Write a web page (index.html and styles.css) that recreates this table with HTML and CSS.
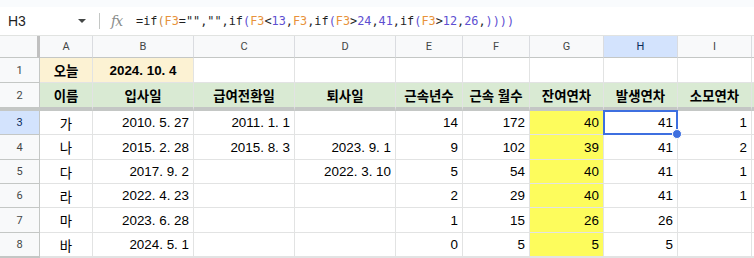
FILE: index.html
```html
<!DOCTYPE html>
<html lang="ko">
<head>
<meta charset="utf-8">
<title>Sheet</title>
<link rel="stylesheet" href="styles.css">
</head>
<body>
<div class="app">
  <div class="topstrip"></div>
  <div class="formulabar">
    <div class="namebox"><span class="ref">H3</span><span class="caret"></span></div>
    <div class="sep"></div>
    <div class="fx">fx</div>
    <div class="formula"><span class="k">=if</span><span class="p1">(</span><span class="rf">F3</span><span class="k">=&quot;&quot;,&quot;&quot;,if</span><span class="p2">(</span><span class="rf">F3</span><span class="k">&lt;</span><span class="n">13</span><span class="k">,</span><span class="rf">F3</span><span class="k">,if</span><span class="p2">(</span><span class="rf">F3</span><span class="k">&gt;</span><span class="n">24</span><span class="k">,</span><span class="n">41</span><span class="k">,if</span><span class="p2">(</span><span class="rf">F3</span><span class="k">&gt;</span><span class="n">12</span><span class="k">,</span><span class="n">26</span><span class="k">,</span><span class="p2">))))</span></div>
  </div>
  <div class="grid">
    <div class="corner"></div>
    <div class="hd">A</div><div class="hd">B</div><div class="hd">C</div><div class="hd">D</div><div class="hd">E</div><div class="hd">F</div><div class="hd">G</div><div class="hd hd-on">H</div><div class="hd">I</div><div class="hd hd-last"></div>

    <div class="rh">1</div>
    <div class="c ctr b yl">오늘</div><div class="c ctr b yl">2024. 10. 4</div><div class="c"></div><div class="c"></div><div class="c"></div><div class="c"></div><div class="c"></div><div class="c"></div><div class="c"></div><div class="c"></div>

    <div class="rh frz">2</div>
    <div class="c ctr b gr frz">이름</div><div class="c ctr b gr frz">입사일</div><div class="c ctr b gr frz">급여전환일</div><div class="c ctr b gr frz">퇴사일</div><div class="c ctr b gr frz">근속년수</div><div class="c ctr b gr frz">근속 월수</div><div class="c ctr b gr frz">잔여연차</div><div class="c ctr b gr frz">발생연차</div><div class="c ctr b gr frz">소모연차</div><div class="c gr frz"></div>

    <div class="rh rh-on">3</div>
    <div class="c ctr">가</div><div class="c r">2010. 5. 27</div><div class="c r">2011. 1. 1</div><div class="c"></div><div class="c r">14</div><div class="c r">172</div><div class="c r hy">40</div><div class="c r sel">41</div><div class="c r">1</div><div class="c"></div>

    <div class="rh">4</div>
    <div class="c ctr">나</div><div class="c r">2015. 2. 28</div><div class="c r">2015. 8. 3</div><div class="c r">2023. 9. 1</div><div class="c r">9</div><div class="c r">102</div><div class="c r hy">39</div><div class="c r">41</div><div class="c r">2</div><div class="c"></div>

    <div class="rh">5</div>
    <div class="c ctr">다</div><div class="c r">2017. 9. 2</div><div class="c"></div><div class="c r">2022. 3. 10</div><div class="c r">5</div><div class="c r">54</div><div class="c r hy">40</div><div class="c r">41</div><div class="c r">1</div><div class="c"></div>

    <div class="rh">6</div>
    <div class="c ctr">라</div><div class="c r">2022. 4. 23</div><div class="c"></div><div class="c"></div><div class="c r">2</div><div class="c r">29</div><div class="c r hy">40</div><div class="c r">41</div><div class="c r">1</div><div class="c"></div>

    <div class="rh">7</div>
    <div class="c ctr">마</div><div class="c r">2023. 6. 28</div><div class="c"></div><div class="c"></div><div class="c r">1</div><div class="c r">15</div><div class="c r hy">26</div><div class="c r">26</div><div class="c"></div><div class="c"></div>

    <div class="rh">8</div>
    <div class="c ctr">바</div><div class="c r">2024. 5. 1</div><div class="c"></div><div class="c"></div><div class="c r">0</div><div class="c r">5</div><div class="c r hy">5</div><div class="c r">5</div><div class="c"></div><div class="c"></div>

    <div class="rh"></div>
    <div class="c"></div><div class="c"></div><div class="c"></div><div class="c"></div><div class="c"></div><div class="c"></div><div class="c"></div><div class="c"></div><div class="c"></div><div class="c"></div>
  </div>
</div>
</body>
</html>
```
FILE: styles.css
```css
* { box-sizing: border-box; }
html, body { margin: 0; padding: 0; background: #fff; }
body { width: 754px; height: 258px; overflow: hidden; font-family: "Liberation Sans", Arial, "Noto Sans CJK KR", sans-serif; color: #000; }

.app { display: flex; flex-direction: column; height: 258px; }

.topstrip { height: 7px; background: #f9fbfd; flex: none; }

.formulabar {
  height: 29px;
  flex: none;
  display: flex;
  align-items: center;
  border-bottom: 1px solid #e1e3e1;
  background: #fff;
}
.namebox { width: 99px; display: flex; align-items: center; padding-left: 8px; }
.ref { font-size: 14px; color: #1f1f1f; width: 70px; }
.caret {
  width: 0; height: 0;
  border-left: 4px solid transparent;
  border-right: 4px solid transparent;
  border-top: 4px solid #444746;
}
.sep { width: 1px; height: 16px; background: #c4c7c5; }
.fx {
  width: 36px;
  padding-left: 11px;
  font-family: "DejaVu Serif", "Liberation Serif", serif;
  font-style: italic;
  font-size: 14px;
  color: #8a8d8c;
  letter-spacing: -1px;
}
.formula {
  font-family: "DejaVu Sans Mono", "Liberation Mono", monospace;
  font-size: 11.85px;
  color: #1f1f1f;
  white-space: pre;
}
.formula .rf { color: #e8923a; }
.formula .n { color: #5d4fd1; }
.formula .p1 { color: #c8893f; }
.formula .p2 { color: #5d4fd1; }

.grid {
  flex: 1;
  min-height: 0;
  overflow: hidden;
  display: grid;
  grid-template-columns: 40px 53px 101px 101px 101px 67px 67px 74px 74px 74px 1fr;
  grid-template-rows: 22px 25px 28px 24px 25px 24px 24px 25px 24px 1fr;
  font-size: 13.4px;
}

.corner {
  background: #f8f9fa;
  border-right: 3px solid #c0c0c0;
  border-bottom: 1px solid #c4c7c5;
}
.hd {
  background: #f8f9fa;
  border-right: 1px solid #dadce0;
  border-bottom: 1px solid #c4c7c5;
  font-family: Roboto, "Liberation Sans", Arial, sans-serif;
  font-size: 11px;
  color: #444746;
  display: flex;
  align-items: center;
  justify-content: center;
}
.hd-on { background: #d3e3fd; color: #0b2a5a; }
.hd-last { border-right: none; }

.rh {
  background: #f8f9fa;
  border-right: 1px solid #c4c7c5;
  border-bottom: 1px solid #c4c7c5;
  font-family: Roboto, "Liberation Sans", Arial, sans-serif;
  font-size: 11px;
  color: #444746;
  display: flex;
  align-items: center;
  justify-content: center;
}
.rh-on { background: #d3e3fd; color: #0b2a5a; }

.c {
  border-right: 1px solid #e2e3e3;
  border-bottom: 1px solid #e2e3e3;
  display: flex;
  align-items: center;
  padding: 0 4px;
  white-space: nowrap;
  overflow: visible;
  position: relative;
}
.ctr { justify-content: center; }
.r { justify-content: flex-end; }
.b { font-weight: bold; }
.yl { background: #fcf2d3; }
.gr { background: #d9ead3; }
.hy { background: #fdfc5c; }
.frz { border-bottom: 4px solid #c4c7c5; }

.sel { z-index: 2; }
.sel::after {
  content: "";
  position: absolute;
  top: -1px; left: -1px; right: -1px; bottom: -1px;
  border: 2px solid #3d6fe0;
  pointer-events: none;
}
.sel::before {
  content: "";
  position: absolute;
  right: -5px; bottom: -5px;
  width: 8px; height: 8px;
  border-radius: 50%;
  background: #3d6fe0;
  border: 1px solid #fff;
  z-index: 3;
}
```
